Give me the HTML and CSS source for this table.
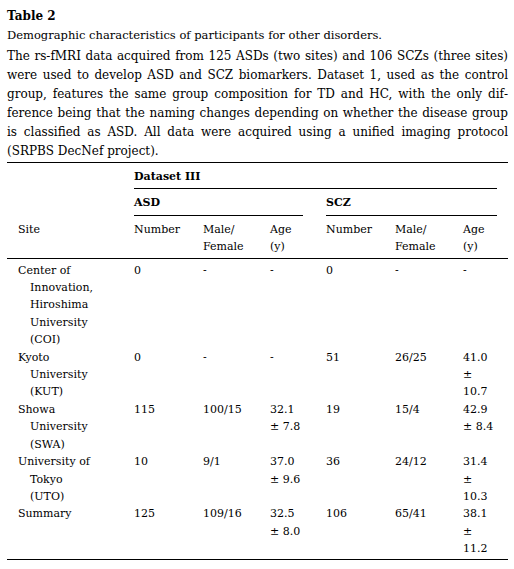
FILE: index.html
```html
<!DOCTYPE html>
<html lang="en">
<head>
  <meta charset="UTF-8">
  <meta name="viewport" content="width=device-width, initial-scale=1.0">
  <title>Table 2</title>
  <link rel="stylesheet" href="styles.css">
</head>
<body>
  <div class="table-wrap">
    <div class="caption">
      <h3 class="label">Table 2</h3>
      <p class="title">Demographic characteristics of participants for other disorders.</p>
      <p class="note">The rs-fMRI data acquired from 125 ASDs (two sites) and 106 SCZs (three sites) were used to develop ASD and SCZ biomarkers. Dataset 1, used as the control group, features the same group composition for TD and HC, with the only dif&shy;ference being that the naming changes depending on whether the disease group is classified as ASD. All data were acquired using a unified imaging protocol (SRPBS DecNef project).</p>
    </div>

    <table class="demo">
      <colgroup>
        <col class="c-site">
        <col class="c-num">
        <col class="c-mf">
        <col class="c-age">
        <col class="c-num">
        <col class="c-mf2">
        <col class="c-age2">
      </colgroup>
      <thead>
        <tr>
          <th></th>
          <th colspan="6" class="group"><div class="rule last">Dataset III</div></th>
        </tr>
        <tr>
          <th></th>
          <th colspan="3" class="group"><div class="rule asd">ASD</div></th>
          <th colspan="3" class="group"><div class="rule last">SCZ</div></th>
        </tr>
        <tr class="cols">
          <th class="site">Site</th>
          <th>Number</th>
          <th>Male/<br>Female</th>
          <th class="age">Age<br>(y)</th>
          <th>Number</th>
          <th>Male/<br>Female</th>
          <th>Age<br>(y)</th>
        </tr>
      </thead>
      <tbody>
        <tr class="first">
          <td class="site">Center of Innovation, Hiroshima University (COI)</td>
          <td>0</td>
          <td>-</td>
          <td class="age">-</td>
          <td>0</td>
          <td>-</td>
          <td>-</td>
        </tr>
        <tr>
          <td class="site">Kyoto University (KUT)</td>
          <td>0</td>
          <td>-</td>
          <td class="age">-</td>
          <td>51</td>
          <td>26/25</td>
          <td>41.0 ± 10.7</td>
        </tr>
        <tr>
          <td class="site">Showa University (SWA)</td>
          <td>115</td>
          <td>100/15</td>
          <td class="age">32.1 ± 7.8</td>
          <td>19</td>
          <td>15/4</td>
          <td>42.9 ± 8.4</td>
        </tr>
        <tr>
          <td class="site">University of Tokyo (UTO)</td>
          <td>10</td>
          <td>9/1</td>
          <td class="age">37.0 ± 9.6</td>
          <td>36</td>
          <td>24/12</td>
          <td>31.4 ± 10.3</td>
        </tr>
        <tr class="last-row">
          <td class="site">Summary</td>
          <td>125</td>
          <td>109/16</td>
          <td class="age">32.5 ± 8.0</td>
          <td>106</td>
          <td>65/41</td>
          <td>38.1 ± 11.2</td>
        </tr>
      </tbody>
    </table>
  </div>
</body>
</html>
```

FILE: styles.css
```css
body {
  margin: 0;
  background-color: #fff;
  color: #000;
  font-family: "DejaVu Serif", "Liberation Serif", serif;
}

.table-wrap {
  width: 501px;
  padding: 7px 6px 0 7px;
}

.caption {
  font-size: 11.5px;
  line-height: 19px;
}

.label {
  margin: 0;
  font-size: 12px;
  font-weight: bold;
}

.title {
  margin: 0 0 2px;
}

.note {
  margin: 0;
  font-size: 12px;
  text-align: justify;
  hyphens: manual;
}

.demo {
  width: 501px;
  margin-top: 1px;
  table-layout: fixed;
  border-collapse: collapse;
  border-top: 1px solid #000;
  border-bottom: 1px solid #000;
  font-size: 11px;
  line-height: 17.4px;
}

.c-site { width: 127px; }
.c-num { width: 69px; }
.c-mf { width: 67px; }
.c-age { width: 56px; }
.c-mf2 { width: 68px; }
.c-age2 { width: 45px; }

th,
td {
  padding: 0 11px 0 0;
  text-align: left;
  vertical-align: top;
}

th {
  font-weight: normal;
}

.group {
  padding: 5px 0 0;
  font-weight: bold;
}

.group .rule {
  padding-bottom: 3px;
  border-bottom: 1px solid #000;
}

.rule.asd {
  margin-right: 23px;
}

.rule.last {
  margin-right: 11px;
}

.cols th {
  padding-top: 5px;
  padding-bottom: 2px;
  border-bottom: 1px solid #000;
}

td.age,
th.age {
  padding-right: 22px;
}

td.site,
th.site {
  padding-left: 23px;
  padding-right: 38px;
  text-indent: -12px;
}

.first td {
  padding-top: 3px;
}

.last-row td {
  padding-bottom: 1px;
}
```
